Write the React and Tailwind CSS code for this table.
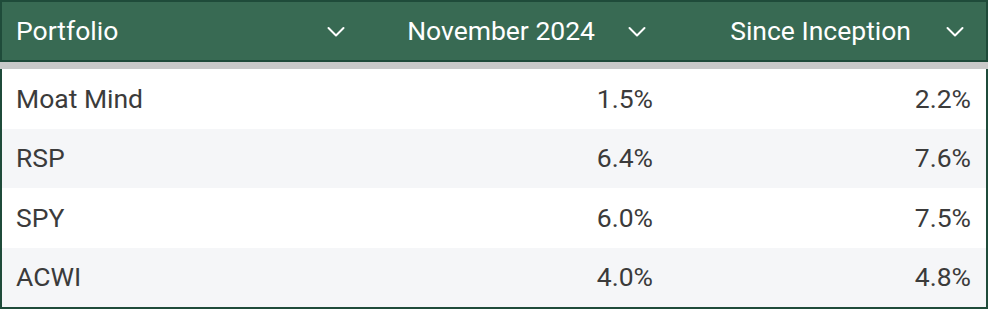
import React from "react";

const rows = [
  { name: "Moat Mind", month: "1.5%", since: "2.2%" },
  { name: "RSP", month: "6.4%", since: "7.6%" },
  { name: "SPY", month: "6.0%", since: "7.5%" },
  { name: "ACWI", month: "4.0%", since: "4.8%" },
];

const Chevron = () => (
  <svg width="24" height="24" viewBox="0 0 24 24" fill="none" className="shrink-0">
    <path d="M4.5 9l7.5 7.5 7.5-7.5" stroke="white" strokeWidth="2" strokeLinecap="round" strokeLinejoin="round" />
  </svg>
);

const App = () => {
  return (
    <div className="w-[988px] h-[310px] bg-white font-['Roboto',sans-serif] text-[26.5px]">
      {/* header */}
      <div className="grid grid-cols-[364px_301px_1fr] h-[62px] bg-[#386a53] border-2 border-[#1f4b3a] text-white">
        <div className="flex items-center justify-between pl-[14px] pr-[18px]">
          <span>Portfolio</span>
          <Chevron />
        </div>
        <div className="flex items-center justify-end gap-[30px] pr-[18px]">
          <span>November 2024</span>
          <Chevron />
        </div>
        <div className="flex items-center justify-end gap-[32px] pr-[19px]">
          <span>Since Inception</span>
          <Chevron />
        </div>
      </div>

      <div className="h-[7px] bg-[#c9c9c9]"></div>

      {/* body */}
      <div className="border-x-2 border-b-2 border-[#1f4b3a] text-[#3b3b3b]">
        {rows.map((r, i) => (
          <div
            key={r.name}
            className={
              "grid grid-cols-[364px_301px_1fr] h-[59.5px] items-center " +
              (i % 2 === 1 ? "bg-[#f5f6f8]" : "bg-white")
            }
          >
            <div className="pl-[14px]">{r.name}</div>
            <div className="text-right pr-[14px]">{r.month}</div>
            <div className="text-right pr-[15px]">{r.since}</div>
          </div>
        ))}
      </div>
    </div>
  );
};

export default App;
